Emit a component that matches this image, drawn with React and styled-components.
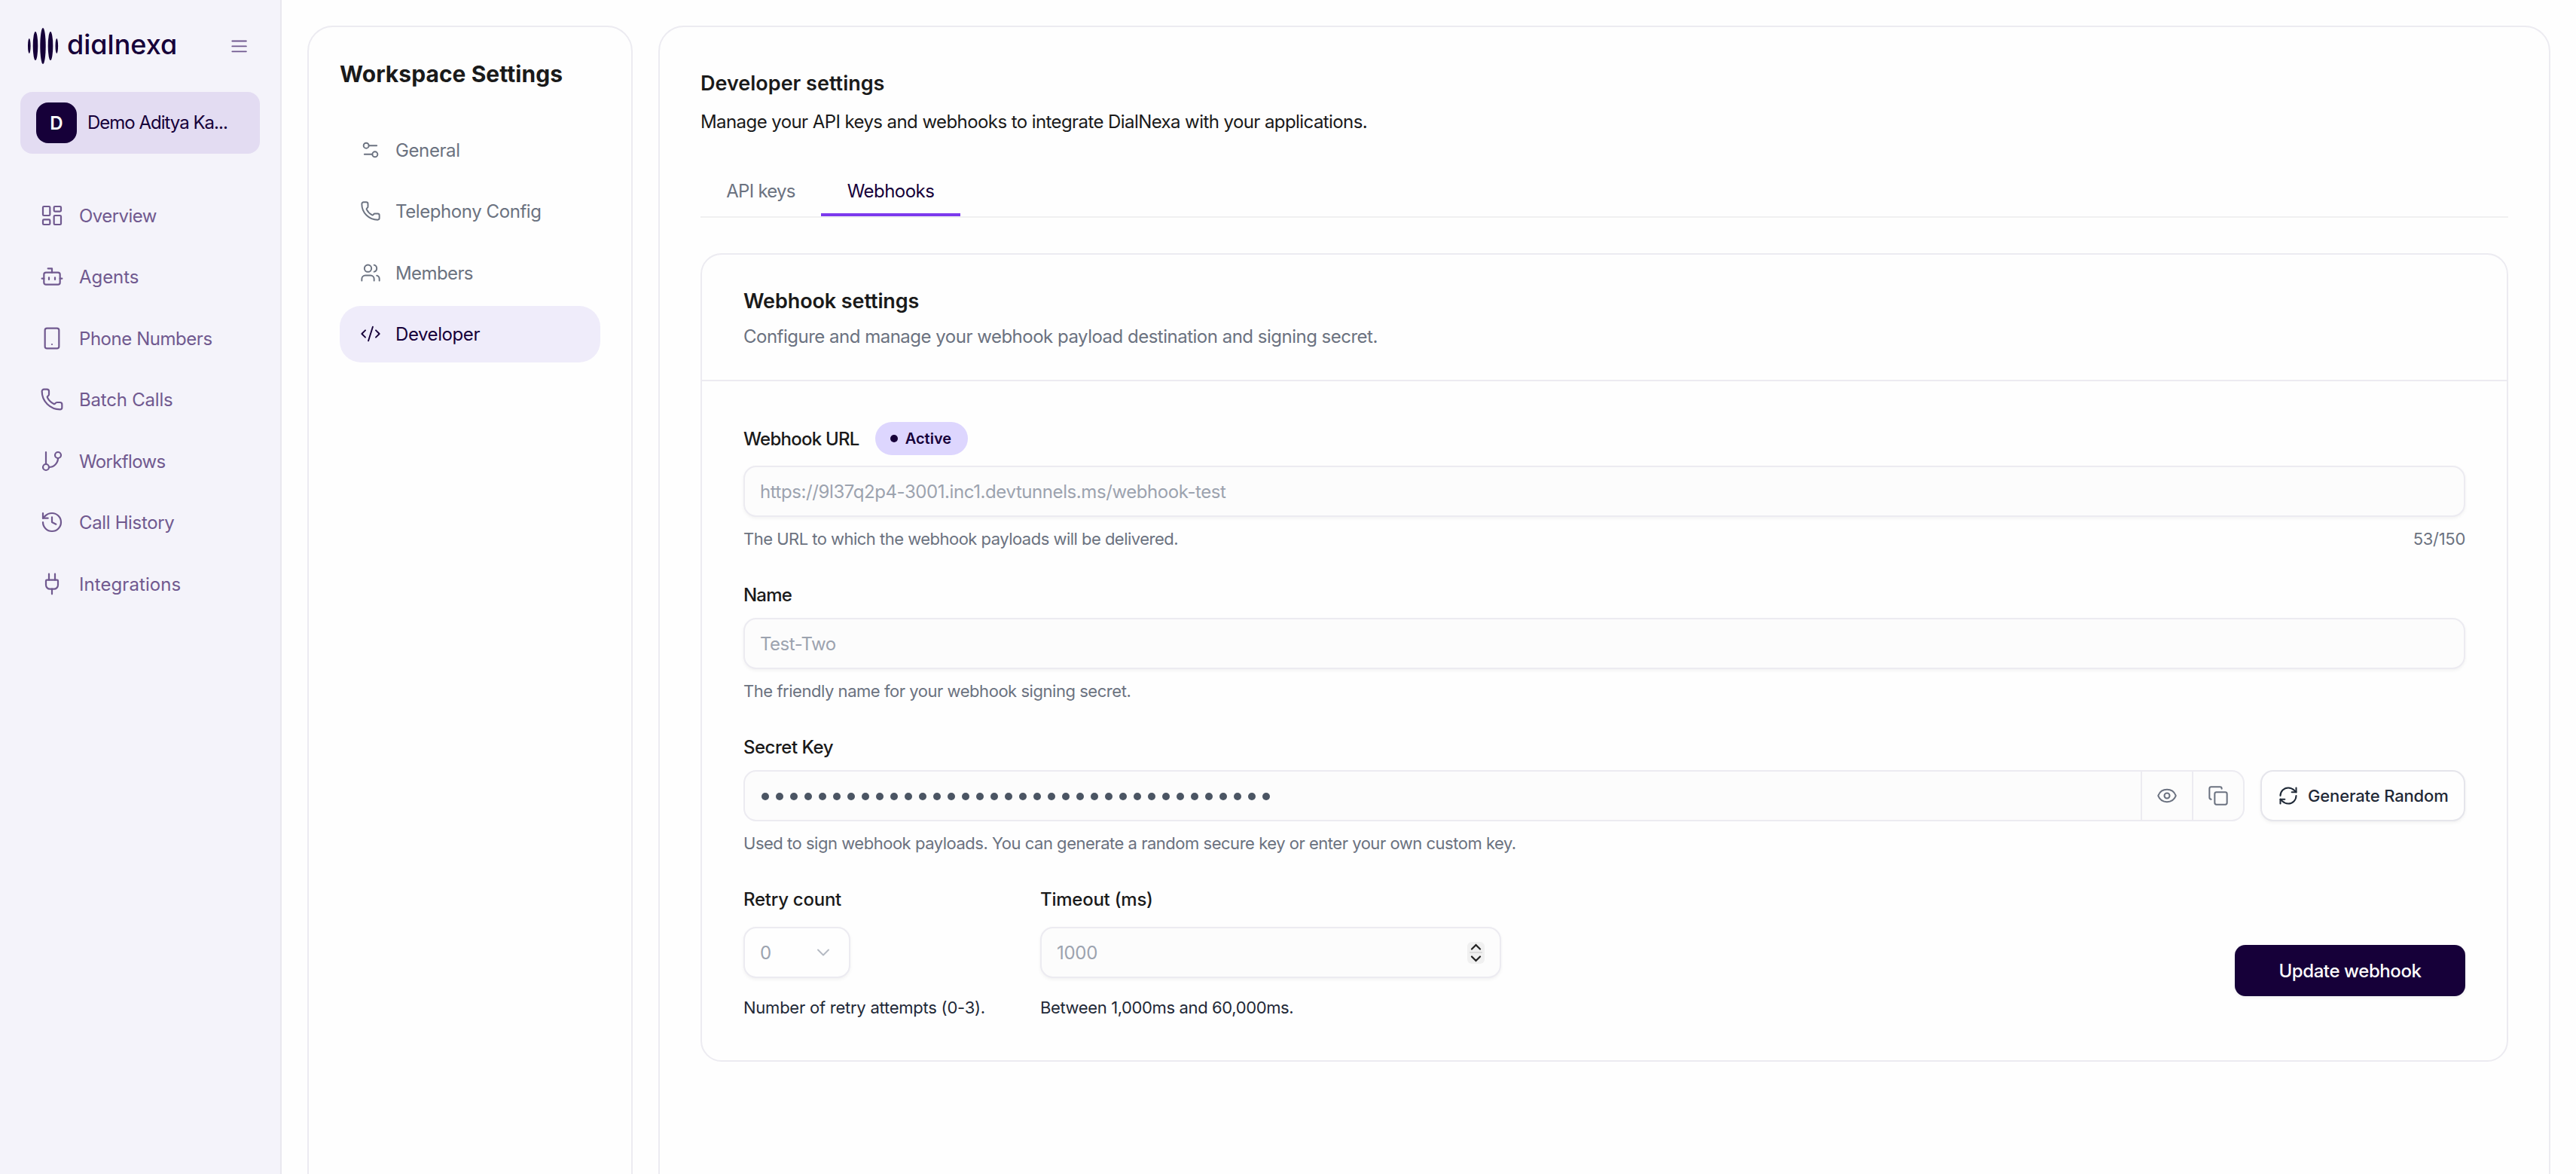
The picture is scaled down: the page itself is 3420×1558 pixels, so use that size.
import React from "react";
import styled, { createGlobalStyle } from "styled-components";
import {
  LayoutDashboard,
  Phone,
  Smartphone,
  GitBranch,
  History,
  Plug,
  Users,
  Settings2,
  Eye,
  Copy,
  RefreshCw,
  ChevronDown,
} from "lucide-react";

const INK = "#160039";
const LINE = "#ecebf1";

const GlobalStyle = createGlobalStyle`
  *, *::before, *::after { box-sizing: border-box; }
  body {
    margin: 0;
    background: #fefefe;
    font-family: Inter, "Liberation Sans", sans-serif;
    font-size: 24px;
    color: #1a1a1a;
  }
  h1, h2, h3, p { margin: 0; }
  button { font-family: inherit; margin: 0; }
`;

const Shell = styled.div`
  display: flex;
  height: 1558px;
  overflow: hidden;
`;

/* ---------- Sidebar ---------- */

const Sidebar = styled.aside`
  flex: 0 0 374px;
  padding: 37px 27px 0;
  background: #f4f3fa;
  border-right: 2px solid #e9e8ef;
`;

const BrandRow = styled.div`
  display: flex;
  align-items: center;
  height: 48px;
  padding: 0 16px 0 10px;
`;

const BrandName = styled.span`
  margin-left: 11px;
  flex: 1;
  padding-bottom: 4px;
  font-size: 36px;
  line-height: 44px;
  font-weight: 500;
  font-feature-settings: "cv11";
  color: ${INK};
`;

const Workspace = styled.button`
  display: flex;
  align-items: center;
  gap: 14px;
  width: 318px;
  height: 82px;
  margin-top: 37px;
  padding: 0 21px;
  border: 0;
  border-radius: 16px;
  background: #e3dcf2;
`;

const Avatar = styled.span`
  display: flex;
  align-items: center;
  justify-content: center;
  width: 54px;
  height: 54px;
  border-radius: 16px;
  background: ${INK};
  color: #fff;
  font-size: 24px;
  font-weight: 600;
`;

const WorkspaceName = styled.span`
  font-size: 24px;
  font-weight: 430;
  line-height: 34px;
  letter-spacing: ${(p) => p.$track}px;
  color: ${INK};
  white-space: nowrap;
`;

const SideNav = styled.nav`
  display: flex;
  flex-direction: column;
  gap: 6.5px;
  margin-top: 44px;
`;

const LinkText = styled.span`
  padding-top: 2px;
  font-weight: 430;
  line-height: 34px;
  letter-spacing: ${(p) => p.$track}px;
  white-space: nowrap;
`;

const SideLink = styled.a`
  display: flex;
  align-items: center;
  gap: 20px;
  height: 75px;
  padding-left: 26px;
  color: #70598f;
`;

/* ---------- Panels ---------- */

const Content = styled.div`
  flex: 1;
  display: flex;
  gap: 34px;
  padding: 34px 34px 0;
`;

const Panel = styled.section`
  height: 1640px;
  border: 2px solid ${LINE};
  border-radius: 34px;
`;

const SettingsPanel = styled(Panel)`
  flex: 0 0 432px;
  padding: 43px 41px;
`;

const PanelTitle = styled.h1`
  font-size: 30px;
  font-weight: 700;
  line-height: 38px;
  letter-spacing: 0.05px;
  white-space: nowrap;
`;

const SettingsNav = styled.nav`
  display: flex;
  flex-direction: column;
  gap: 6.5px;
  margin-top: 44px;
`;

const SettingsLink = styled.a`
  display: flex;
  align-items: center;
  gap: 19px;
  height: 75px;
  padding-left: 27px;
  border-radius: 28px;
  background: ${(p) => (p.$active ? "#efecfa" : "transparent")};
  color: ${(p) => (p.$active ? INK : "#6b7280")};
`;

const MainPanel = styled(Panel)`
  flex: 1;
  padding: 57px 54px;
`;

const Heading = styled.h2`
  font-size: 27px;
  font-weight: 600;
  line-height: 36px;
  letter-spacing: ${(p) => p.$track}px;
`;

const Lead = styled.p`
  margin-top: ${(p) => p.$gap}px;
  font-size: 24px;
  line-height: 34px;
  letter-spacing: ${(p) => p.$track}px;
  color: ${(p) => p.$color};
`;

const TabBar = styled.div`
  display: flex;
  margin-top: 41px;
  border-bottom: 2px solid #f0f0f1;
`;

const Tab = styled.div`
  width: ${(p) => p.$width}px;
  height: 67px;
  line-height: 67px;
  text-align: center;
  font-weight: 430;
  letter-spacing: ${(p) => p.$track}px;
  color: ${(p) => (p.$active ? INK : "#6b7280")};
  box-shadow: ${(p) => (p.$active ? "inset 0 -4px 0 #7c3aed" : "none")};
`;

const Card = styled.section`
  margin-top: 47px;
  border: 2px solid ${LINE};
  border-radius: 28px;
`;

const CardHeader = styled.header`
  padding: 44px 55px 40px;
  border-bottom: 2px solid ${LINE};
`;

const CardBody = styled.div`
  display: flex;
  flex-direction: column;
  gap: 41px;
  padding: 54px 55px;
`;

/* ---------- Form ---------- */

const Field = styled.div`
  width: ${(p) => (p.$width ? p.$width + "px" : "auto")};
`;

const LabelRow = styled.div`
  display: flex;
  align-items: center;
  gap: 21px;
`;

const Label = styled.div`
  height: 34px;
  padding-top: 1px;
  font-size: 24px;
  font-weight: 450;
  line-height: 34px;
  letter-spacing: ${(p) => p.$track}px;
  white-space: nowrap;
`;

const Badge = styled.span`
  display: flex;
  align-items: center;
  gap: 10px;
  width: 123px;
  height: 44px;
  padding-left: 20px;
  border-radius: 22px;
  background: #ddd6fe;
  color: ${INK};
  font-size: 20px;
  font-weight: 600;
`;

const Dot = styled.i`
  width: 10px;
  height: 10px;
  border-radius: 50%;
  background: ${(p) => p.$color};
`;

const InputBox = styled.div`
  display: flex;
  align-items: center;
  justify-content: space-between;
  width: ${(p) => (p.$width ? p.$width + "px" : "auto")};
  height: 68px;
  margin-top: ${(p) => p.$gap || 14}px;
  padding: 0 20px;
  border: 2px solid ${LINE};
  border-radius: 17px;
  background: ${(p) => (p.$plain ? "#fefefe" : "#fcfcfc")};
  box-shadow: 0 2px 4px rgba(0, 0, 0, 0.05);
  color: #9ca3af;
  letter-spacing: ${(p) => p.$track}px;
`;

const HelpRow = styled.div`
  display: flex;
  justify-content: space-between;
  margin-top: ${(p) => p.$gap || 13}px;
`;

const Help = styled.div`
  font-size: 22px;
  line-height: 32px;
  letter-spacing: ${(p) => p.$track}px;
  color: ${(p) => (p.$dark ? "#1f2937" : "#6b7280")};
  white-space: nowrap;
`;

const SecretRow = styled.div`
  display: flex;
  gap: 21px;
  margin-top: 14px;
`;

const SecretGroup = styled.div`
  display: flex;
  flex: 1;
  height: 68px;
  border: 2px solid ${LINE};
  border-radius: 17px;
  background: #fcfcfc;
  overflow: hidden;
`;

const SecretDots = styled.div`
  display: flex;
  flex: 1;
  align-items: center;
  gap: 9px;
  padding: 2px 0 0 22px;
`;

const IconCell = styled.div`
  display: flex;
  align-items: center;
  justify-content: center;
  width: 68px;
  border-left: 2px solid ${LINE};
  color: #6b7280;
`;

const OutlineButton = styled.button`
  display: flex;
  align-items: center;
  gap: 12px;
  width: 272px;
  height: 68px;
  padding: 0 0 0 21px;
  border: 2px solid #e5e5eb;
  border-radius: 17px;
  background: #fefefe;
  box-shadow: 0 2px 4px rgba(0, 0, 0, 0.05);
  color: #1f2937;
  font-size: 22px;
  font-weight: 450;
  letter-spacing: ${(p) => p.$track}px;
  white-space: nowrap;
`;

const BottomRow = styled.div`
  display: flex;
  align-items: flex-end;
  gap: 54px;
`;

const SelectArrow = styled(ChevronDown)`
  opacity: 0.75;
`;

const Stepper = styled.div`
  display: flex;
  flex-direction: column;
  align-items: center;
  justify-content: space-between;
  width: 23px;
  height: 29px;
  padding: 2px 0;
  border-radius: 6px;
  background: #f0f0f0;
`;

const StepDivider = styled.i`
  width: 17px;
  height: 2px;
  background: #dcdcdc;
`;

const PrimaryButton = styled.button`
  width: 306px;
  height: 68px;
  margin: 0 0 31px auto;
  padding: 0;
  border: 0;
  border-radius: 14px;
  background: ${INK};
  box-shadow: 0 2px 4px rgba(0, 0, 0, 0.06);
  color: #fff;
  font-size: 24px;
  font-weight: 550;
  letter-spacing: ${(p) => p.$track}px;
`;

/* ---------- Drawings ---------- */

function LogoMark() {
  return (
    <svg width="41" height="48" viewBox="0 0 41 48" fill={INK}>
      <ellipse cx="1.8" cy="24" rx="1.8" ry="10" />
      <ellipse cx="10" cy="24" rx="3.3" ry="19" />
      <ellipse cx="20" cy="24" rx="3.7" ry="24" />
      <ellipse cx="30" cy="24" rx="3.3" ry="19" />
      <ellipse cx="38.3" cy="24" rx="1.8" ry="10" />
    </svg>
  );
}

function MenuIcon() {
  return (
    <svg width="22" height="18" viewBox="0 0 22 18" stroke="#70598f" strokeWidth="1.8" strokeLinecap="round">
      <path d="M1.3 2.5h18.6M1.3 9.4h18.6M1.3 16.3h18.6" />
    </svg>
  );
}

function StepArrow({ down }) {
  return (
    <svg width="15" height="9" viewBox="0 0 15 9" fill="none" stroke="#222" strokeWidth="2.2" strokeLinecap="round">
      <path d={down ? "M2 1.5l5.5 5.5 5.5-5.5" : "M2 7.5l5.5-5.5 5.5 5.5"} />
    </svg>
  );
}

function Glyph({ size = 32, children }) {
  return (
    <svg
      width={size}
      height={size}
      viewBox="0 0 24 24"
      fill="none"
      stroke="currentColor"
      strokeWidth="1.65"
      strokeLinecap="round"
      strokeLinejoin="round"
    >
      {children}
    </svg>
  );
}

function BotIcon() {
  return (
    <Glyph>
      <path d="M12 8V4H8" />
      <rect width="16" height="12" x="4" y="8" rx="2" />
      <path d="M2 14h2M20 14h2M15 13v2M9 13v2" />
    </Glyph>
  );
}

function CodeIcon() {
  return (
    <Glyph size={28}>
      <path d="m18 16 4-4-4-4" />
      <path d="m6 8-4 4 4 4" />
      <path d="m14.5 4-5 16" />
    </Glyph>
  );
}

const SIDE_LINKS = [
  { label: "Overview", icon: <LayoutDashboard size={32} strokeWidth={1.65} />, track: -0.55 },
  { label: "Agents", icon: <BotIcon />, track: -0.05 },
  { label: "Phone Numbers", icon: <Smartphone size={32} strokeWidth={1.65} />, track: -0.45 },
  { label: "Batch Calls", icon: <Phone size={32} strokeWidth={1.65} />, track: -0.2 },
  { label: "Workflows", icon: <GitBranch size={32} strokeWidth={1.65} />, track: -0.65 },
  { label: "Call History", icon: <History size={32} strokeWidth={1.65} />, track: -0.35 },
  { label: "Integrations", icon: <Plug size={32} strokeWidth={1.65} />, track: 0.08 },
];

const SETTINGS_LINKS = [
  { label: "General", icon: <Settings2 size={28} strokeWidth={1.65} />, track: -0.4 },
  { label: "Telephony Config", icon: <Phone size={28} strokeWidth={1.65} />, track: -0.42 },
  { label: "Members", icon: <Users size={28} strokeWidth={1.65} />, track: -0.6 },
  { label: "Developer", icon: <CodeIcon />, track: -0.42, active: true },
];

export default function App() {
  return (
    <>
      <GlobalStyle />
      <Shell>
        <Sidebar>
          <BrandRow>
            <LogoMark />
            <BrandName>dialnexa</BrandName>
            <MenuIcon />
          </BrandRow>
          <Workspace>
            <Avatar>D</Avatar>
            <WorkspaceName $track={-1.0}>Demo Aditya Ka...</WorkspaceName>
          </Workspace>
          <SideNav>
            {SIDE_LINKS.map((l) => (
              <SideLink key={l.label}>
                {l.icon}
                <LinkText $track={l.track}>{l.label}</LinkText>
              </SideLink>
            ))}
          </SideNav>
        </Sidebar>

        <Content>
          <SettingsPanel>
            <PanelTitle>Workspace Settings</PanelTitle>
            <SettingsNav>
              {SETTINGS_LINKS.map((l) => (
                <SettingsLink key={l.label} $active={l.active}>
                  {l.icon}
                  <LinkText $track={l.track}>{l.label}</LinkText>
                </SettingsLink>
              ))}
            </SettingsNav>
          </SettingsPanel>

          <MainPanel>
            <Heading $track={0}>Developer settings</Heading>
            <Lead $gap={16} $color="#1a1a1a" $track={-0.58}>
              Manage your API keys and webhooks to integrate DialNexa with your applications.
            </Lead>
            <TabBar>
              <Tab $width={160} $track={-0.75}>API keys</Tab>
              <Tab $width={185} $track={-0.55} $active>Webhooks</Tab>
            </TabBar>

            <Card>
              <CardHeader>
                <Heading $track={-0.1}>Webhook settings</Heading>
                <Lead $gap={12} $color="#6b7280" $track={-0.5}>
                  Configure and manage your webhook payload destination and signing secret.
                </Lead>
              </CardHeader>
              <CardBody>
                <Field>
                  <LabelRow>
                    <Label $track={-0.75}>Webhook URL</Label>
                    <Badge>
                      <Dot $color={INK} />
                      Active
                    </Badge>
                  </LabelRow>
                  <InputBox $track={-0.42}>https://9l37q2p4-3001.inc1.devtunnels.ms/webhook-test</InputBox>
                  <HelpRow>
                    <Help $track={-0.52}>The URL to which the webhook payloads will be delivered.</Help>
                    <Help $track={-0.3}>53/150</Help>
                  </HelpRow>
                </Field>

                <Field>
                  <Label $track={-0.8}>Name</Label>
                  <InputBox $track={-0.5}>Test-Two</InputBox>
                  <HelpRow>
                    <Help $track={-0.46}>The friendly name for your webhook signing secret.</Help>
                  </HelpRow>
                </Field>

                <Field>
                  <Label $track={-0.5}>Secret Key</Label>
                  <SecretRow>
                    <SecretGroup>
                      <SecretDots>
                        {Array.from({ length: 36 }, (_, i) => (
                          <Dot key={i} $color="#4b5563" />
                        ))}
                      </SecretDots>
                      <IconCell>
                        <Eye size={28} strokeWidth={1.75} />
                      </IconCell>
                      <IconCell>
                        <Copy size={28} strokeWidth={1.75} />
                      </IconCell>
                    </SecretGroup>
                    <OutlineButton $track={-0.15}>
                      <RefreshCw size={28} strokeWidth={1.75} />
                      Generate Random
                    </OutlineButton>
                  </SecretRow>
                  <HelpRow>
                    <Help $track={-0.48}>
                      Used to sign webhook payloads. You can generate a random secure key or enter your own custom key.
                    </Help>
                  </HelpRow>
                </Field>

                <BottomRow>
                  <Field $width={340}>
                    <Label $track={-0.25}>Retry count</Label>
                    <InputBox $width={142} $gap={20} $track={0} $plain>
                      0
                      <SelectArrow size={28} strokeWidth={1.6} />
                    </InputBox>
                    <HelpRow $gap={23}>
                      <Help $dark $track={-0.24}>Number of retry attempts (0-3).</Help>
                    </HelpRow>
                  </Field>
                  <Field $width={612}>
                    <Label $track={-0.25}>Timeout (ms)</Label>
                    <InputBox $gap={20} $track={-0.3}>
                      1000
                      <Stepper>
                        <StepArrow />
                        <StepDivider />
                        <StepArrow down />
                      </Stepper>
                    </InputBox>
                    <HelpRow $gap={23}>
                      <Help $dark $track={-0.38}>Between 1,000ms and 60,000ms.</Help>
                    </HelpRow>
                  </Field>
                  <PrimaryButton $track={-0.4}>Update webhook</PrimaryButton>
                </BottomRow>
              </CardBody>
            </Card>
          </MainPanel>
        </Content>
      </Shell>
    </>
  );
}
